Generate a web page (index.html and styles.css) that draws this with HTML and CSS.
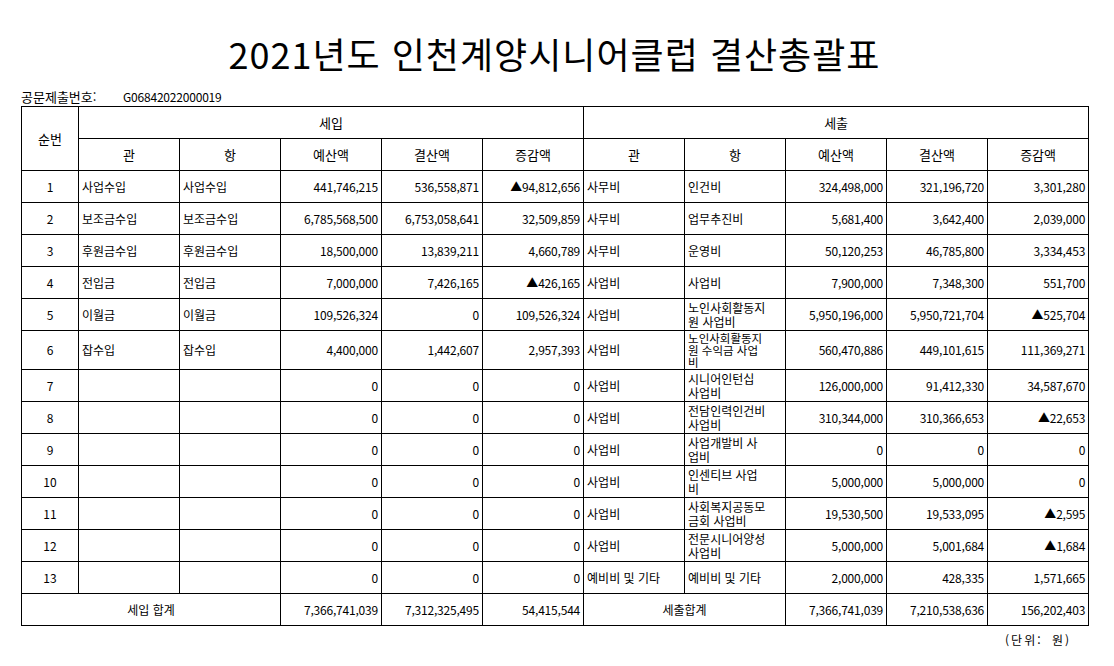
FILE: index.html
```html
<!DOCTYPE html>
<html lang="ko">
<head>
<meta charset="utf-8">
<title>2021년도 인천계양시니어클럽 결산총괄표</title>
<link rel="stylesheet" href="styles.css">
</head>
<body>
<div class="page">
  <div class="title"><span class="title-text">2021년도 인천계양시니어클럽 결산총괄표</span></div>
  <div class="docno"><span class="docno-label">공문제출번호:</span><span class="docno-value">G06842022000019</span></div>
  <table class="sheet">
    <colgroup>
      <col class="c-no"><col class="c-w"><col class="c-w"><col class="c-w"><col class="c-w"><col class="c-w">
      <col class="c-w"><col class="c-w"><col class="c-w"><col class="c-w"><col class="c-w">
    </colgroup>
    <thead>
      <tr class="hr"><th rowspan="2">순번</th><th colspan="5">세입</th><th colspan="5">세출</th></tr>
      <tr class="hr"><th>관</th><th>항</th><th>예산액</th><th>결산액</th><th>증감액</th><th>관</th><th>항</th><th>예산액</th><th>결산액</th><th>증감액</th></tr>
    </thead>
    <tbody>
      <tr><td class="c">1</td><td>사업수입</td><td>사업수입</td><td class="n">441,746,215</td><td class="n">536,558,871</td><td class="n">▲94,812,656</td><td>사무비</td><td>인건비</td><td class="n">324,498,000</td><td class="n">321,196,720</td><td class="n">3,301,280</td></tr>
      <tr><td class="c">2</td><td>보조금수입</td><td>보조금수입</td><td class="n">6,785,568,500</td><td class="n">6,753,058,641</td><td class="n">32,509,859</td><td>사무비</td><td>업무추진비</td><td class="n">5,681,400</td><td class="n">3,642,400</td><td class="n">2,039,000</td></tr>
      <tr><td class="c">3</td><td>후원금수입</td><td>후원금수입</td><td class="n">18,500,000</td><td class="n">13,839,211</td><td class="n">4,660,789</td><td>사무비</td><td>운영비</td><td class="n">50,120,253</td><td class="n">46,785,800</td><td class="n">3,334,453</td></tr>
      <tr><td class="c">4</td><td>전입금</td><td>전입금</td><td class="n">7,000,000</td><td class="n">7,426,165</td><td class="n">▲426,165</td><td>사업비</td><td>사업비</td><td class="n">7,900,000</td><td class="n">7,348,300</td><td class="n">551,700</td></tr>
      <tr><td class="c">5</td><td>이월금</td><td>이월금</td><td class="n">109,526,324</td><td class="n">0</td><td class="n">109,526,324</td><td>사업비</td><td class="wrap">노인사회활동지<br>원 사업비</td><td class="n">5,950,196,000</td><td class="n">5,950,721,704</td><td class="n">▲525,704</td></tr>
      <tr class="tall"><td class="c">6</td><td>잡수입</td><td>잡수입</td><td class="n">4,400,000</td><td class="n">1,442,607</td><td class="n">2,957,393</td><td>사업비</td><td class="wrap wrap3">노인사회활동지<br>원 수익금 사업<br>비</td><td class="n">560,470,886</td><td class="n">449,101,615</td><td class="n">111,369,271</td></tr>
      <tr><td class="c">7</td><td></td><td></td><td class="n">0</td><td class="n">0</td><td class="n">0</td><td>사업비</td><td class="wrap">시니어인턴십<br>사업비</td><td class="n">126,000,000</td><td class="n">91,412,330</td><td class="n">34,587,670</td></tr>
      <tr><td class="c">8</td><td></td><td></td><td class="n">0</td><td class="n">0</td><td class="n">0</td><td>사업비</td><td class="wrap">전담인력인건비<br>사업비</td><td class="n">310,344,000</td><td class="n">310,366,653</td><td class="n">▲22,653</td></tr>
      <tr><td class="c">9</td><td></td><td></td><td class="n">0</td><td class="n">0</td><td class="n">0</td><td>사업비</td><td class="wrap">사업개발비 사<br>업비</td><td class="n">0</td><td class="n">0</td><td class="n">0</td></tr>
      <tr><td class="c">10</td><td></td><td></td><td class="n">0</td><td class="n">0</td><td class="n">0</td><td>사업비</td><td class="wrap">인센티브 사업<br>비</td><td class="n">5,000,000</td><td class="n">5,000,000</td><td class="n">0</td></tr>
      <tr><td class="c">11</td><td></td><td></td><td class="n">0</td><td class="n">0</td><td class="n">0</td><td>사업비</td><td class="wrap">사회복지공동모<br>금회 사업비</td><td class="n">19,530,500</td><td class="n">19,533,095</td><td class="n">▲2,595</td></tr>
      <tr><td class="c">12</td><td></td><td></td><td class="n">0</td><td class="n">0</td><td class="n">0</td><td>사업비</td><td class="wrap">전문시니어양성<br>사업비</td><td class="n">5,000,000</td><td class="n">5,001,684</td><td class="n">▲1,684</td></tr>
      <tr><td class="c">13</td><td></td><td></td><td class="n">0</td><td class="n">0</td><td class="n">0</td><td>예비비 및 기타</td><td>예비비 및 기타</td><td class="n">2,000,000</td><td class="n">428,335</td><td class="n">1,571,665</td></tr>
      <tr><td class="c" colspan="3">세입 합계</td><td class="n">7,366,741,039</td><td class="n">7,312,325,495</td><td class="n">54,415,544</td><td class="c" colspan="2">세출합계</td><td class="n">7,366,741,039</td><td class="n">7,210,538,636</td><td class="n">156,202,403</td></tr>
    </tbody>
  </table>
  <div class="unit">(단위: 원)</div>
</div>
</body>
</html>
```

FILE: styles.css
```css
html, body {
  margin: 0;
  padding: 0;
  background: #ffffff;
}

body {
  font-family: "Noto Sans CJK KR", "Noto Sans", sans-serif;
  color: #000000;
}

.page {
  width: 1067px;
  padding-left: 21px;
}

.title {
  height: 70px;
  margin-top: 18px;
  display: flex;
  align-items: center;
  justify-content: center;
}

.title-text {
  display: inline-block;
  font-size: 36px;
  font-weight: 400;
  line-height: 40px;
  letter-spacing: 1px;
}

.docno {
  height: 14px;
  font-size: 13px;
  line-height: 14px;
  display: flex;
  margin-top: 2px;
  margin-bottom: 2px;
}

.docno-label {
  width: 102px;
}

.docno-value {
  font-size: 12px;
  letter-spacing: -0.2px;
}

.sheet {
  border-collapse: collapse;
  table-layout: fixed;
  width: 1068px;
  font-size: 12px;
}

.c-no {
  width: 57px;
}

.c-w {
  width: 101px;
}

.sheet th,
.sheet td {
  border: 1px solid #000000;
  height: 31px;
  padding: 0 3px;
  font-weight: 400;
  line-height: 14px;
  white-space: nowrap;
  overflow: hidden;
}

.sheet th {
  text-align: center;
  font-size: 13px;
}

.sheet td {
  text-align: left;
}

.sheet td.c {
  text-align: center;
}

.sheet td.n {
  text-align: right;
  letter-spacing: -0.2px;
}

.sheet td.wrap {
  line-height: 14px;
  font-size: 12px;
}

.sheet td.wrap3 {
  line-height: 12px;
  font-size: 11.5px;
}

.sheet tr.tall td {
  height: 38px;
}

.unit {
  width: 1050px;
  text-align: right;
  font-size: 12px;
  line-height: 16px;
  margin-top: 6px;
  letter-spacing: 2px;
  word-spacing: 4px;
}
```
